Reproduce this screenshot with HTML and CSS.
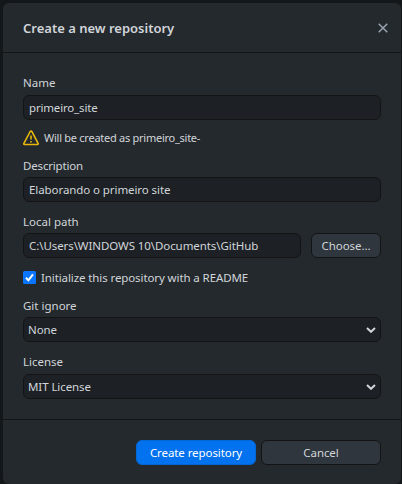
FILE: index.html
```html
<!DOCTYPE html>
<html lang="en">
<head>
<meta charset="utf-8">
<title>Create a new repository</title>
<link rel="stylesheet" href="styles.css">
</head>
<body>
<main class="dialog">
  <header class="header">
    <h1 class="title">Create a new repository</h1>
    <svg class="close" viewBox="0 0 10 10"><path d="M.7.7l8.6 8.6M9.3.7L.7 9.3"/></svg>
  </header>
  <section class="content">
    <div class="label">Name</div>
    <div class="field tight">primeiro_site</div>
    <div class="warning">
      <svg class="alert" viewBox="0 0 16 16"><path d="M7.2 1.5L.9 13.4c-.3.6 0 1.1.6 1.1h13c.6 0 .9-.5.6-1.1L8.8 1.5c-.4-.7-1.2-.7-1.6 0z"/><path d="M8 5.4v4M8 11v1.6"/></svg>
      <span>Will be created as primeiro_site-</span>
    </div>
    <div class="label low tight">Description</div>
    <div class="field">Elaborando o primeiro site</div>
    <div class="label low label-next">Local path</div>
    <div class="row">
      <div class="field path">C:\Users\WINDOWS 10\Documents\GitHub</div>
      <div class="button choose">Choose...</div>
    </div>
    <div class="check-row">
      <svg class="checkbox" viewBox="0 0 13 13"><rect width="13" height="13" rx="1.5"/><path d="M3 6.8l2.4 2.5L10 3.4"/></svg>
      <span>Initialize this repository with a README</span>
    </div>
    <div class="label low">Git ignore</div>
    <div class="field select"><span>None</span><svg class="chevron" viewBox="0 0 10 6"><path d="M1 1l4 3.8L9 1"/></svg></div>
    <div class="label label-license">License</div>
    <div class="field select"><span>MIT License</span><svg class="chevron" viewBox="0 0 10 6"><path d="M1 1l4 3.8L9 1"/></svg></div>
  </section>
  <footer class="footer">
    <div class="button primary">Create repository</div>
    <div class="button cancel">Cancel</div>
  </footer>
</main>
</body>
</html>
```
FILE: styles.css
```css
* { box-sizing: border-box; }
body {
  margin: 0;
  height: 484px;
  padding: 3px 1px 0 3px;
  overflow: hidden;
  background: #14171a;
  color: #d1d5da;
  font: 11.5px/16px "Noto Sans", sans-serif;
  white-space: nowrap;
}
.dialog {
  height: 481px;
  background: #24292d;
  border-radius: 6px;
  overflow: hidden;
}
.header {
  height: 50px;
  display: flex;
  align-items: center;
  justify-content: space-between;
  padding: 0 13px 0 20px;
  border-bottom: 1px solid #141414;
}
.title { margin: 0; font-size: 13px; font-weight: 600; line-height: 18px; }
.close { width: 10px; height: 10px; stroke: #9aa2ad; stroke-width: 1.5; fill: none; }
.content { height: 366px; padding: 22px 20px 0; }
.label { height: 16px; margin-bottom: 4px; }
.low { line-height: 18px; }
.label-next { margin-top: 11px; }
.label-license { margin-top: 12px; }
.field {
  height: 25px;
  display: flex;
  align-items: center;
  padding: 0 5px;
  border: 1px solid #141414;
  border-radius: 6px;
  background: #1d2125;
  letter-spacing: -.08px;
}
.tight { letter-spacing: -.17px; }
.select { justify-content: space-between; padding: 0 4px; }
.chevron { width: 10px; height: 6px; fill: none; stroke: #d1d5da; stroke-width: 2; }
.warning {
  height: 37px;
  display: flex;
  align-items: center;
  gap: 5px;
  padding-bottom: 1px;
  font-size: 11px;
  letter-spacing: -.26px;
}
.alert { width: 16px; height: 16px; fill: none; stroke: #e8b80c; stroke-width: 1.6; }
.row { display: flex; gap: 10px; }
.path { flex: 1; }
.button {
  height: 25px;
  display: flex;
  align-items: center;
  justify-content: center;
  border: 1px solid #141414;
  border-radius: 6px;
  background: #2f363d;
  letter-spacing: -.08px;
}
.choose { width: 70px; }
.check-row { height: 39px; display: flex; align-items: center; gap: 5px; letter-spacing: -.1px; }
.checkbox { width: 13px; height: 13px; fill: #0a75ff; }
.checkbox path { fill: none; stroke: #fff; stroke-width: 2; }
.footer {
  height: 65px;
  display: flex;
  gap: 5px;
  justify-content: flex-end;
  padding: 20px 20px 0 0;
  border-top: 1px solid #141414;
}
.primary, .cancel { width: 120px; }
.primary { border-color: #0366d6; background: #0372ef; color: #fff; }
```
